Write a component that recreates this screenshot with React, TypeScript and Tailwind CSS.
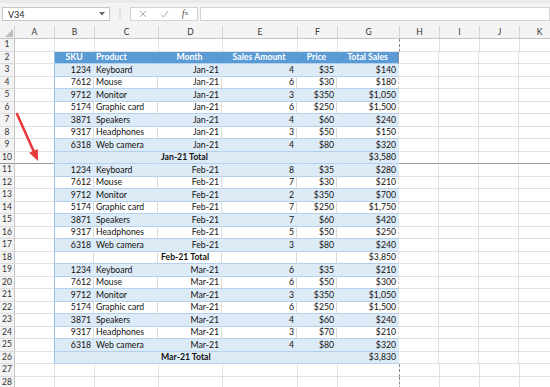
import React from "react";

const W = ["w-[15px]", "w-[40px]", "w-[40px]", "w-[64px]", "w-[64px]", "w-[75px]", "w-[40px]", "w-[62px]", "w-[40px]", "w-[40px]", "w-[40px]", "w-[40px]"];
const LETTERS = ["A", "B", "C", "D", "E", "F", "G", "H", "I", "J", "K"];

type Line = { kind: "head" | "item" | "total"; band: boolean; cells: string[] };

const months = [
	{
		m: "Jan-21",
		rows: [
			["1234", "Keyboard", "4", "$35", "$140"],
			["7612", "Mouse", "6", "$30", "$180"],
			["9712", "Monitor", "3", "$350", "$1,050"],
			["5174", "Graphic card", "6", "$250", "$1,500"],
			["3871", "Speakers", "4", "$60", "$240"],
			["9317", "Headphones", "3", "$50", "$150"],
			["6318", "Web camera", "4", "$80", "$320"],
		],
		total: "$3,580",
		totalBand: true,
	},
	{
		m: "Feb-21",
		rows: [
			["1234", "Keyboard", "8", "$35", "$280"],
			["7612", "Mouse", "7", "$30", "$210"],
			["9712", "Monitor", "2", "$350", "$700"],
			["5174", "Graphic card", "7", "$250", "$1,750"],
			["3871", "Speakers", "7", "$60", "$420"],
			["9317", "Headphones", "5", "$50", "$250"],
			["6318", "Web camera", "3", "$80", "$240"],
		],
		total: "$3,850",
		totalBand: false,
	},
	{
		m: "Mar-21",
		rows: [
			["1234", "Keyboard", "6", "$35", "$210"],
			["7612", "Mouse", "6", "$50", "$300"],
			["9712", "Monitor", "3", "$350", "$1,050"],
			["5174", "Graphic card", "6", "$250", "$1,500"],
			["3871", "Speakers", "4", "$60", "$240"],
			["9317", "Headphones", "3", "$70", "$210"],
			["6318", "Web camera", "4", "$80", "$320"],
		],
		total: "$3,830",
		totalBand: true,
	},
];

// sheet rows 2..26 belong to the table
const table: Line[] = [{ kind: "head", band: false, cells: ["SKU", "Product", "Month", "Sales Amount", "Price", "Total Sales"] }];
months.forEach((g) => {
	g.rows.forEach((r, i) => {
		table.push({ kind: "item", band: i % 2 === 0, cells: [r[0], r[1], g.m, r[2], r[3], r[4]] });
	});
	table.push({ kind: "total", band: g.totalBand, cells: ["", "", g.m + " Total", "", "", g.total] });
});

const headAlign = ["justify-center", "justify-start", "justify-center", "justify-center", "justify-center", "justify-center"];
const itemAlign = ["justify-end", "justify-start", "justify-end", "justify-end", "justify-end", "justify-end"];

function TableCell({ line, i }: { line: Line; i: number }) {
	const last = i === 5;
	let bg = "bg-white border-r-[#d9d9d9]";
	if (line.kind === "head") bg = "bg-[#5b9bd5] border-r-[#5b9bd5] text-white font-bold";
	else if (line.band) bg = "bg-[#ddebf7] border-r-[#ddebf7]";
	const align =
		line.kind === "head" ? headAlign[i] : line.kind === "total" ? (i === 2 ? "justify-start font-bold pl-[3px]" : "justify-end") : itemAlign[i];
	return (
		<div
			className={`${W[i + 2]} shrink-0 h-full flex items-end px-[2px] pb-[1px] whitespace-nowrap overflow-visible border-r border-b border-b-[#b4d0ec] ${bg} ${align} ${
				i === 0 ? "border-l border-l-[#9bc2e6] -ml-px" : ""
			} ${last ? "[border-right-style:dashed] border-r-[#8a8a8a]" : ""}`}
		>
			{line.cells[i]}
		</div>
	);
}

function Empty({ w, pageBreak, dashed }: { w: string; pageBreak?: boolean; dashed?: boolean }) {
	return (
		<div
			className={`${w} shrink-0 h-full bg-white border-r border-b ${pageBreak ? "border-b-[#9a9a9a]" : "border-b-[#e1e1e1]"} ${
				dashed ? "[border-right-style:dashed] border-r-[#8a8a8a]" : "border-r-[#e1e1e1]"
			}`}
		/>
	);
}

function SheetRow({ n }: { n: number }) {
	const line = n >= 2 && n <= 26 ? table[n - 2] : null;
	const pb = n === 10;
	return (
		<div className="flex h-[12.5px] relative">
			<div
				className={`${W[0]} shrink-0 h-full flex items-center justify-center bg-[#f3f3f3] border-r border-r-[#c6c6c6] border-b ${
					pb ? "border-b-[#9a9a9a]" : "border-b-[#dcdcdc]"
				} text-[#333] text-[8.5px]`}
			>
				{n}
			</div>
			<Empty w={W[1]} pageBreak={pb} />
			{line
				? [0, 1, 2, 3, 4, 5].map((i) => <TableCell key={i} line={line} i={i} />)
				: [2, 3, 4, 5, 6, 7].map((c) => <Empty key={c} w={W[c]} dashed={c === 7} />)}
			{[8, 9, 10, 11].map((c) => (
				<Empty key={c} w={W[c]} pageBreak={pb} />
			))}
		</div>
	);
}

export default function App() {
	return (
		<div className="relative w-[550px] h-[387px] overflow-hidden bg-white text-[#111] text-[8.7px] leading-[11px] font-['Lato','Liberation_Sans',sans-serif]">
			{/* formula bar */}
			<div className="h-[26px] bg-[#f3f3f3] border-t-[3px] border-t-[#e9e9e9] flex items-start pt-[4px]">
				<div className="ml-[2px] w-[108px] h-[14px] bg-white border border-[#c6c6c6] flex items-center pl-[5px] pr-[4px] text-[9px] text-[#222]">
					<span className="flex-1">V34</span>
					<svg width="6" height="4" viewBox="0 0 6 4">
						<path d="M0 0 L6 0 L3 3.5 Z" fill="#666" />
					</svg>
				</div>
				<div className="w-[20px] h-[14px] flex items-center justify-center">
					<svg width="2" height="9" viewBox="0 0 2 9">
						<circle cx="1" cy="1" r="0.8" fill="#b5b5b5" />
						<circle cx="1" cy="4.5" r="0.8" fill="#b5b5b5" />
						<circle cx="1" cy="8" r="0.8" fill="#b5b5b5" />
					</svg>
				</div>
				<div className="w-[68px] h-[14px] bg-white border border-[#d4d4d4] flex items-center">
					<div className="w-[24px] flex justify-center">
						<svg width="8" height="8" viewBox="0 0 8 8">
							<path d="M1 1 L7 7 M7 1 L1 7" stroke="#a8a8a8" strokeWidth="1" />
						</svg>
					</div>
					<div className="w-[18px] flex justify-center">
						<svg width="9" height="8" viewBox="0 0 9 8">
							<path d="M1 4.5 L3.5 7 L8 1" stroke="#a8a8a8" strokeWidth="1" fill="none" />
						</svg>
					</div>
					<div className="w-[24px] flex justify-center text-[#555] italic font-['Liberation_Serif',serif] text-[10px] leading-none">
						f<span className="text-[7px] not-italic translate-y-[1px]">x</span>
					</div>
				</div>
				<div className="ml-[2px] flex-1 h-[14px] bg-white border border-[#d4d4d4]" />
			</div>

			{/* column headers */}
			<div className="flex h-[13px] bg-[#f3f3f3] border-b border-b-[#c6c6c6] text-[#333] text-[8.5px]">
				<div className={`${W[0]} shrink-0 h-full border-r border-r-[#d4d4d4] relative`}>
					<svg className="absolute right-[1px] bottom-[1px]" width="8" height="8" viewBox="0 0 8 8">
						<path d="M8 0 L8 8 L0 8 Z" fill="#bcbcbc" />
					</svg>
				</div>
				{LETTERS.map((l, i) => (
					<div key={l} className={`${W[i + 1]} shrink-0 h-full flex items-center justify-center border-r border-r-[#d4d4d4]`}>
						{l}
					</div>
				))}
			</div>

			{/* rows */}
			<div className="flex flex-col">
				{Array.from({ length: 28 }, (_, i) => (
					<SheetRow key={i} n={i + 1} />
				))}
			</div>

			{/* red annotation arrow */}
			<svg className="absolute left-0 top-0 pointer-events-none" width="550" height="387" viewBox="0 0 550 387">
				<line x1="17" y1="114" x2="33.8" y2="151.5" stroke="#e8393b" strokeWidth="2.6" strokeLinecap="round" />
				<polygon points="38,161 37.8,149 29.2,152.8" fill="#e8393b" />
			</svg>
		</div>
	);
}
